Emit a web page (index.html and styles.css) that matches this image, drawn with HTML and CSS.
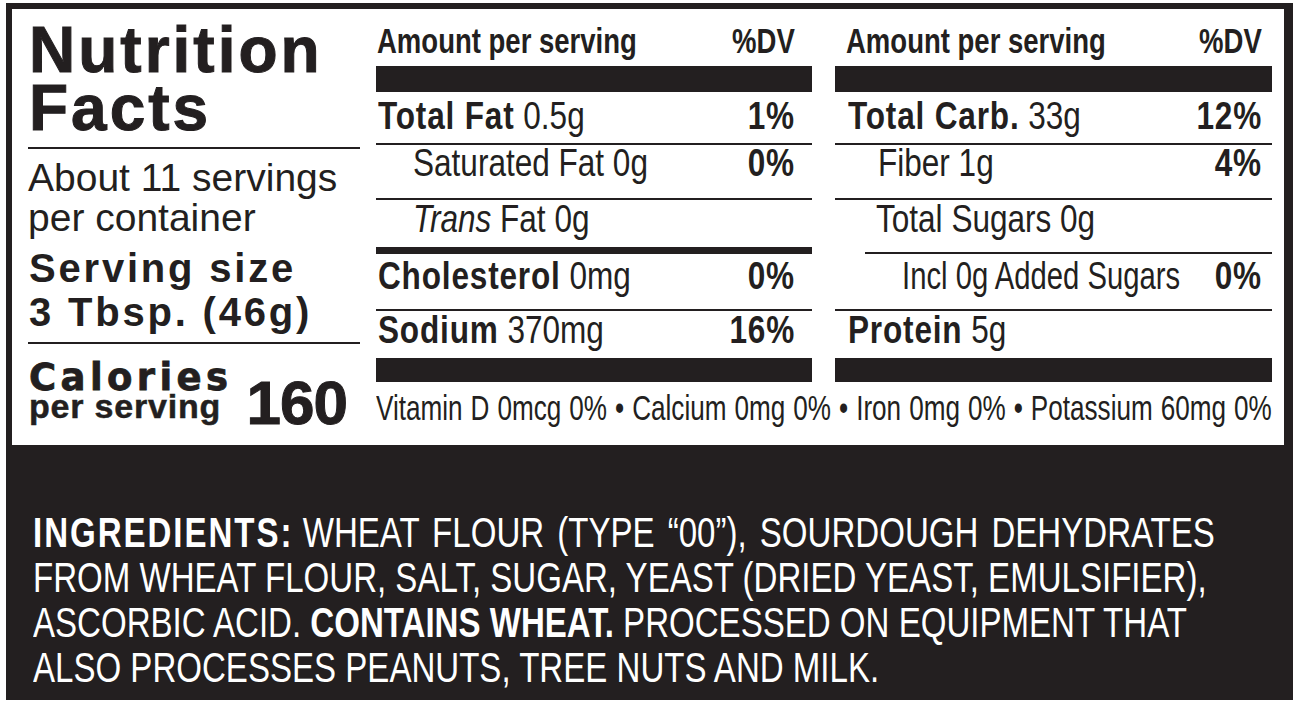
FILE: index.html
```html
<!DOCTYPE html>
<html lang="en">
<head>
<meta charset="utf-8">
<title>Nutrition Facts</title>
<link rel="stylesheet" href="styles.css">
</head>
<body>
<div class="label">
  <section class="panel">
    <div class="intro">
      <h1 class="title">Nutrition<br>Facts</h1>
      <p class="servings">About 11 servings<br>per container</p>
      <p class="size">Serving size<br>3 Tbsp. (46g)</p>
      <div class="calories">
        <div class="cal-label"><span class="cal-word">Calories</span><span class="cal-per">per serving</span></div>
        <span class="cal-num">160</span>
      </div>
    </div>
    <div class="facts">
      <div class="hd"><span class="t">Amount per serving</span><span class="p">%DV</span></div>
      <div class="hd rc"><span class="t">Amount per serving</span><span class="p">%DV</span></div>
      <div class="bar"></div>
      <div class="bar"></div>

      <div class="row r1"><span class="t"><b>Total Fat</b> 0.5g</span><b class="p">1%</b></div>
      <div class="row r1 rc"><span class="t"><b>Total Carb.</b> 33g</span><b class="p">12%</b></div>

      <div class="row r2 sub"><span class="t">Saturated Fat 0g</span><b class="p">0%</b></div>
      <div class="row r2 rc sub"><span class="t">Fiber 1g</span><b class="p">4%</b></div>

      <div class="row r3 sub thick"><span class="t"><i>Trans</i> Fat 0g</span></div>
      <div class="row r3 rc inset"><span class="t">Total Sugars 0g</span></div>

      <div class="row r4"><span class="t"><b>Cholesterol</b> 0mg</span><b class="p">0%</b></div>
      <div class="row r4 rc sub2"><span class="t tight">Incl 0g Added Sugars</span><b class="p">0%</b></div>

      <div class="row r5"><span class="t"><b>Sodium</b> 370mg</span><b class="p">16%</b></div>
      <div class="row r5 rc"><span class="t"><b>Protein</b> 5g</span></div>

      <div class="bar b2"></div>
      <div class="bar b2"></div>

      <div class="vitamins"><span class="vt">Vitamin D 0mcg 0% • Calcium 0mg 0% • Iron 0mg 0% • Potassium 60mg 0%</span></div>
    </div>
  </section>
  <section class="ingredients">
    <p><b class="lead">INGREDIENTS:</b> <span class="wide">WHEAT FLOUR (TYPE “00”), SOURDOUGH DEHYDRATES</span><br>FROM WHEAT FLOUR, SALT, SUGAR, YEAST (DRIED YEAST, EMULSIFIER),<br>ASCORBIC ACID. <b>CONTAINS WHEAT.</b> PROCESSED ON EQUIPMENT THAT<br>ALSO PROCESSES PEANUTS, TREE NUTS AND MILK.</p>
  </section>
</div>
</body>
</html>
```

FILE: styles.css
```css
html, body {
  margin: 0;
  padding: 0;
  background: #ffffff;
  overflow: hidden;
}

body {
  font-family: "Liberation Sans", Arial, sans-serif;
  color: #231f20;
}

.label {
  margin: 3px 0 0 6px;
  width: 1287px;
  height: 697px;
  background: #231f20;
  padding: 6px 9px 0 6px;
  box-sizing: border-box;
  display: flex;
  flex-direction: column;
  overflow: hidden;
}

.panel {
  background: #ffffff;
  height: 436px;
  flex: none;
  display: flex;
  padding: 0 12px 0 16px;
  gap: 16px;
}

/* ---------- left intro column ---------- */
.intro {
  width: 332px;
  flex: none;
  padding-top: 12px;
}

.title {
  margin: 0;
  font-size: 64px;
  line-height: 58px;
  font-weight: 700;
  letter-spacing: 3px;
  -webkit-text-stroke: 1px #231f20;
  padding: 0 0 10px 1px;
  border-bottom: 2px solid #231f20;
}

.servings {
  margin: 9px 0 0 0;
  font-size: 39px;
  line-height: 40px;
  font-weight: 400;
}

.size {
  margin: 8px 0 0 0;
  padding: 0 0 8px 1px;
  font-size: 40px;
  line-height: 44px;
  font-weight: 700;
  letter-spacing: 2.8px;
  border-bottom: 2px solid #231f20;
}

.calories {
  margin-top: 20px;
  display: flex;
  align-items: flex-end;
  gap: 14px;
  padding-left: 1px;
}

.cal-label {
  display: flex;
  flex-direction: column;
  margin-bottom: 9px;
}

.cal-word {
  font-family: "DejaVu Sans", sans-serif;
  font-weight: 700;
  font-size: 37px;
  line-height: 28px;
  letter-spacing: 4.4px;
  -webkit-text-stroke: 0.8px #231f20;
}

.cal-per {
  font-weight: 700;
  font-size: 34px;
  line-height: 28px;
  letter-spacing: 0.8px;
  -webkit-text-stroke: 0.5px #231f20;
}

.cal-num {
  font-weight: 700;
  font-size: 62px;
  line-height: 52px;
  letter-spacing: -1px;
  -webkit-text-stroke: 1px #231f20;
}

/* ---------- facts grid ---------- */
.facts {
  display: grid;
  grid-template-columns: 436px 437px;
  column-gap: 23px;
  align-content: start;
}

.hd,
.row {
  display: flex;
  white-space: nowrap;
}

.t {
  display: block;
  flex: 1 1 0;
  min-width: 0;
  transform-origin: 0 50%;
}

.p {
  display: block;
  flex: none;
  transform-origin: 100% 50%;
}

.hd {
  font-weight: 700;
  font-size: 35px;
  line-height: 50px;
  padding: 7px 17px 0 1px;
}

.hd .t,
.hd .p {
  transform: scaleX(0.786);
}

.hd.rc {
  padding: 7px 10px 0 11px;
}

.bar {
  height: 26px;
  background: #231f20;
}

.bar.b2 {
  height: 24px;
}

.row {
  font-size: 38px;
  line-height: 36px;
  padding-left: 2px;
  padding-right: 17px;
}

.row .t,
.row .p {
  transform: scaleX(0.83);
}

.row .t.tight {
  transform: scaleX(0.77);
}

.row b {
  font-weight: 700;
  letter-spacing: 1px;
}

.row i {
  font-style: italic;
}

.row.rc {
  padding-left: 13px;
  padding-right: 10px;
}

.row.sub {
  padding-left: 37px;
}

.row.rc.sub {
  padding-left: 43px;
}

.row.rc.sub2 {
  padding-left: 67px;
}

.r1 {
  padding-top: 6px;
  padding-bottom: 9px;
  border-bottom: 2px solid #231f20;
}

.r2 {
  padding-top: 0;
  padding-bottom: 17px;
  border-bottom: 2px solid #231f20;
}

.r3 {
  padding-top: 1px;
  padding-bottom: 10px;
}

.r3.thick {
  border-bottom: 7px solid #231f20;
}

.row.r3.inset {
  margin-left: 30px;
  padding-left: 11px;
  border-bottom: 2px solid #231f20;
}

.r4 {
  padding-top: 4px;
  padding-bottom: 15px;
  border-bottom: 2px solid #231f20;
}

.r5 {
  padding-top: 1px;
  padding-bottom: 10px;
}

.vitamins {
  grid-column: 1 / -1;
  font-size: 35px;
  line-height: 36px;
  padding-top: 8px;
  white-space: nowrap;
}

.vt {
  display: inline-block;
  transform: scaleX(0.746);
  transform-origin: 0 50%;
  word-spacing: 1px;
}

/* ---------- ingredients ---------- */
.ingredients {
  flex: 1;
  padding: 65px 20px 0 21px;
  color: #ffffff;
}

.ingredients p {
  margin: 0;
  font-size: 42px;
  line-height: 45px;
  white-space: nowrap;
  transform: scaleX(0.787);
  transform-origin: 0 50%;
}

.ingredients b {
  font-weight: 700;
}

.ingredients b.lead {
  letter-spacing: 2.5px;
}

.ingredients .wide {
  word-spacing: 5px;
}
```
